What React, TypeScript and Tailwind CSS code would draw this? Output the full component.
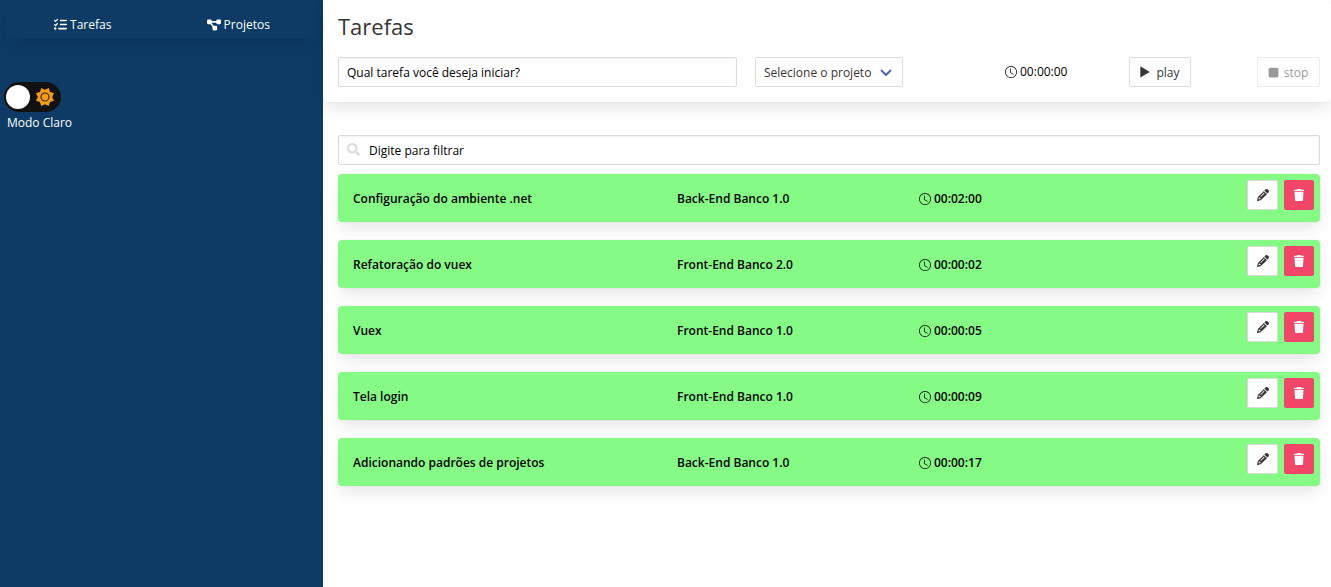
import { useState } from "react";
import { FaPencil, FaTrash, FaDiagramProject, FaListCheck, FaStop } from "react-icons/fa6";
import { FaSearch } from "react-icons/fa";
import { BsClock } from "react-icons/bs";

type Task = { id: number; title: string; project: string; time: string };

const tasks: Task[] = [
  { id: 1, title: "Configuração do ambiente .net", project: "Back-End Banco 1.0", time: "00:02:00" },
  { id: 2, title: "Refatoração do vuex", project: "Front-End Banco 2.0", time: "00:00:02" },
  { id: 3, title: "Vuex", project: "Front-End Banco 1.0", time: "00:00:05" },
  { id: 4, title: "Tela login", project: "Front-End Banco 1.0", time: "00:00:09" },
  { id: 5, title: "Adicionando padrões de projetos", project: "Back-End Banco 1.0", time: "00:00:17" },
];

function SunIcon() {
  return (
    <svg viewBox="0 0 20 20" className="size-5" aria-hidden="true">
      <path
        d="M10 .2 12.8 3.4 16.9 3.1 16.6 7.2 19.8 10 16.6 12.8 16.9 16.9 12.8 16.6 10 19.8 7.2 16.6 3.1 16.9 3.4 12.8 .2 10 3.4 7.2 3.1 3.1 7.2 3.4Z"
        transform="rotate(22.5 10 10)"
        fill="#f39c12"
      />
      <circle cx="10" cy="10" r="4" fill="#f39c12" stroke="#3a2a10" strokeWidth="1.2" />
    </svg>
  );
}

function PlayIcon() {
  return (
    <svg viewBox="0 0 10 12" className="h-3 w-2.5" aria-hidden="true">
      <path d="M.3 .3 9.8 6 .3 11.5Z" fill="currentColor" />
    </svg>
  );
}

function Sidebar() {
  const [dark, setDark] = useState(false);
  return (
    <aside className="w-[323px] shrink-0 bg-[#0d3b66] text-white">
      <nav className="mx-1.5 flex h-[39px] items-center rounded-md pt-[10px] shadow-[0_8px_16px_-2px_rgba(10,10,10,0.1)]">
        <a href="#tarefas" className="flex flex-1 items-center justify-center gap-[3px] pr-0.5">
          <FaListCheck className="size-[13px]" />
          Tarefas
        </a>
        <a href="#projetos" className="flex flex-1 items-center justify-center gap-[3px] pr-0.5">
          <FaDiagramProject className="size-3.5" />
          Projetos
        </a>
      </nav>
      <div className="mt-[43px] flex flex-col items-start pl-1">
        <button
          type="button"
          role="switch"
          aria-checked={dark}
          aria-labelledby="modo"
          onClick={() => setDark(!dark)}
          className="flex h-[30px] w-[57px] items-center justify-between rounded-full bg-[#111] pr-[6px] pl-[2px]"
        >
          <span className="size-6 rounded-full bg-white" />
          <SunIcon />
        </button>
        <span id="modo" className="mt-0.5 pl-[3px]">
          {dark ? "Modo Escuro" : "Modo Claro"}
        </span>
      </div>
    </aside>
  );
}

function TaskForm() {
  return (
    <form className="rounded-md bg-white pr-[11px] pb-[15px] pl-[15px] shadow-[0_8px_16px_-2px_rgba(10,10,10,0.1),0_0_0_1px_rgba(10,10,10,0.02)]">
      <h1 className="pt-2 text-[22px] leading-9 text-[#363636]">Tarefas</h1>
      <div className="mt-[13px] flex items-center">
        <input
          type="text"
          aria-label="Nome da tarefa"
          placeholder="Qual tarefa você deseja iniciar?"
          className="h-[30px] min-w-0 flex-1 rounded-xs border border-[#dbdbdb] px-2 text-black shadow-[inset_0_1px_2px_rgba(10,10,10,0.05)] placeholder:text-black"
        />
        <div className="relative ml-[18px] w-[148px]">
          <select
            aria-label="Projeto"
            className="block h-[30px] w-full appearance-none rounded-xs border border-[#dbdbdb] bg-white px-2 pt-0.5 text-[#363636]"
          >
            <option>Selecione o projeto</option>
            <option>Back-End Banco 1.0</option>
            <option>Front-End Banco 1.0</option>
            <option>Front-End Banco 2.0</option>
          </select>
          <svg viewBox="0 0 12 8" className="pointer-events-none absolute top-3 right-[11px] h-2 w-3" aria-hidden="true">
            <path d="M1.5 1.5 6 6 10.5 1.5" fill="none" stroke="#485fc7" strokeWidth="1.8" strokeLinecap="round" strokeLinejoin="round" />
          </svg>
        </div>
        <div className="ml-[102px] flex w-[315px] items-center justify-between">
          <span className="flex items-center gap-[3px] text-black">
            <BsClock className="size-3" />
            00:00:00
          </span>
          <div className="flex gap-[66px]">
            <button type="button" className="flex h-[30px] w-[62px] items-center justify-center gap-1.5 rounded-xs border border-[#dbdbdb] bg-white text-[#363636]">
              <PlayIcon />
              <span className="pt-0.5">play</span>
            </button>
            <button type="button" disabled className="flex h-[30px] w-[63px] items-center justify-center gap-1 rounded-xs border border-[#dbdbdb] bg-white pr-0.5 text-[#363636] opacity-50">
              <FaStop className="size-[13px]" />
              <span className="pt-0.5">stop</span>
            </button>
          </div>
        </div>
      </div>
    </form>
  );
}

function TaskRow({ task }: { task: Task }) {
  return (
    <li className="grid h-12 grid-cols-[324fr_242fr_395fr] items-center rounded bg-[#85fb85] pr-1.5 pl-[15px] font-semibold text-black shadow-[0_8px_16px_-2px_rgba(10,10,10,0.1),0_0_0_1px_rgba(10,10,10,0.02)]">
      <span className="pt-0.5">{task.title}</span>
      <span className="pt-0.5">{task.project}</span>
      <div className="flex items-center justify-between">
        <span className="flex items-center gap-[3px] pt-0.5">
          <BsClock className="size-3" />
          {task.time}
        </span>
        <div className="flex gap-1.5 pb-1.5">
          <button type="button" aria-label="Editar" className="flex h-[30px] w-[31px] items-center justify-center rounded-xs border border-[#dbdbdb] bg-white text-[#363636]">
            <FaPencil className="size-3" />
          </button>
          <button type="button" aria-label="Excluir" className="flex size-[30px] items-center justify-center rounded-xs bg-[#f14668] text-white">
            <FaTrash className="size-3" />
          </button>
        </div>
      </div>
    </li>
  );
}

export default function App() {
  return (
    <div className="flex min-h-screen bg-white font-['Open_Sans','Noto_Sans',sans-serif] text-xs leading-[18px]">
      <Sidebar />
      <main className="min-w-0 flex-1">
        <TaskForm />
        <section className="mt-[33px] pr-[11px] pb-6 pl-[15px]">
          <div className="relative">
            <FaSearch className="absolute top-2 left-[9px] size-[13px] text-[#dbdbdb]" />
            <input
              type="text"
              aria-label="Filtrar tarefas"
              placeholder="Digite para filtrar"
              className="block h-[30px] w-full rounded-xs border border-[#dbdbdb] pr-2 pl-[30px] text-black shadow-[inset_0_1px_2px_rgba(10,10,10,0.05)] placeholder:text-black"
            />
          </div>
          <ul className="mt-[9px] flex flex-col gap-[18px]">
            {tasks.map((task) => (
              <TaskRow key={task.id} task={task} />
            ))}
          </ul>
        </section>
      </main>
    </div>
  );
}
